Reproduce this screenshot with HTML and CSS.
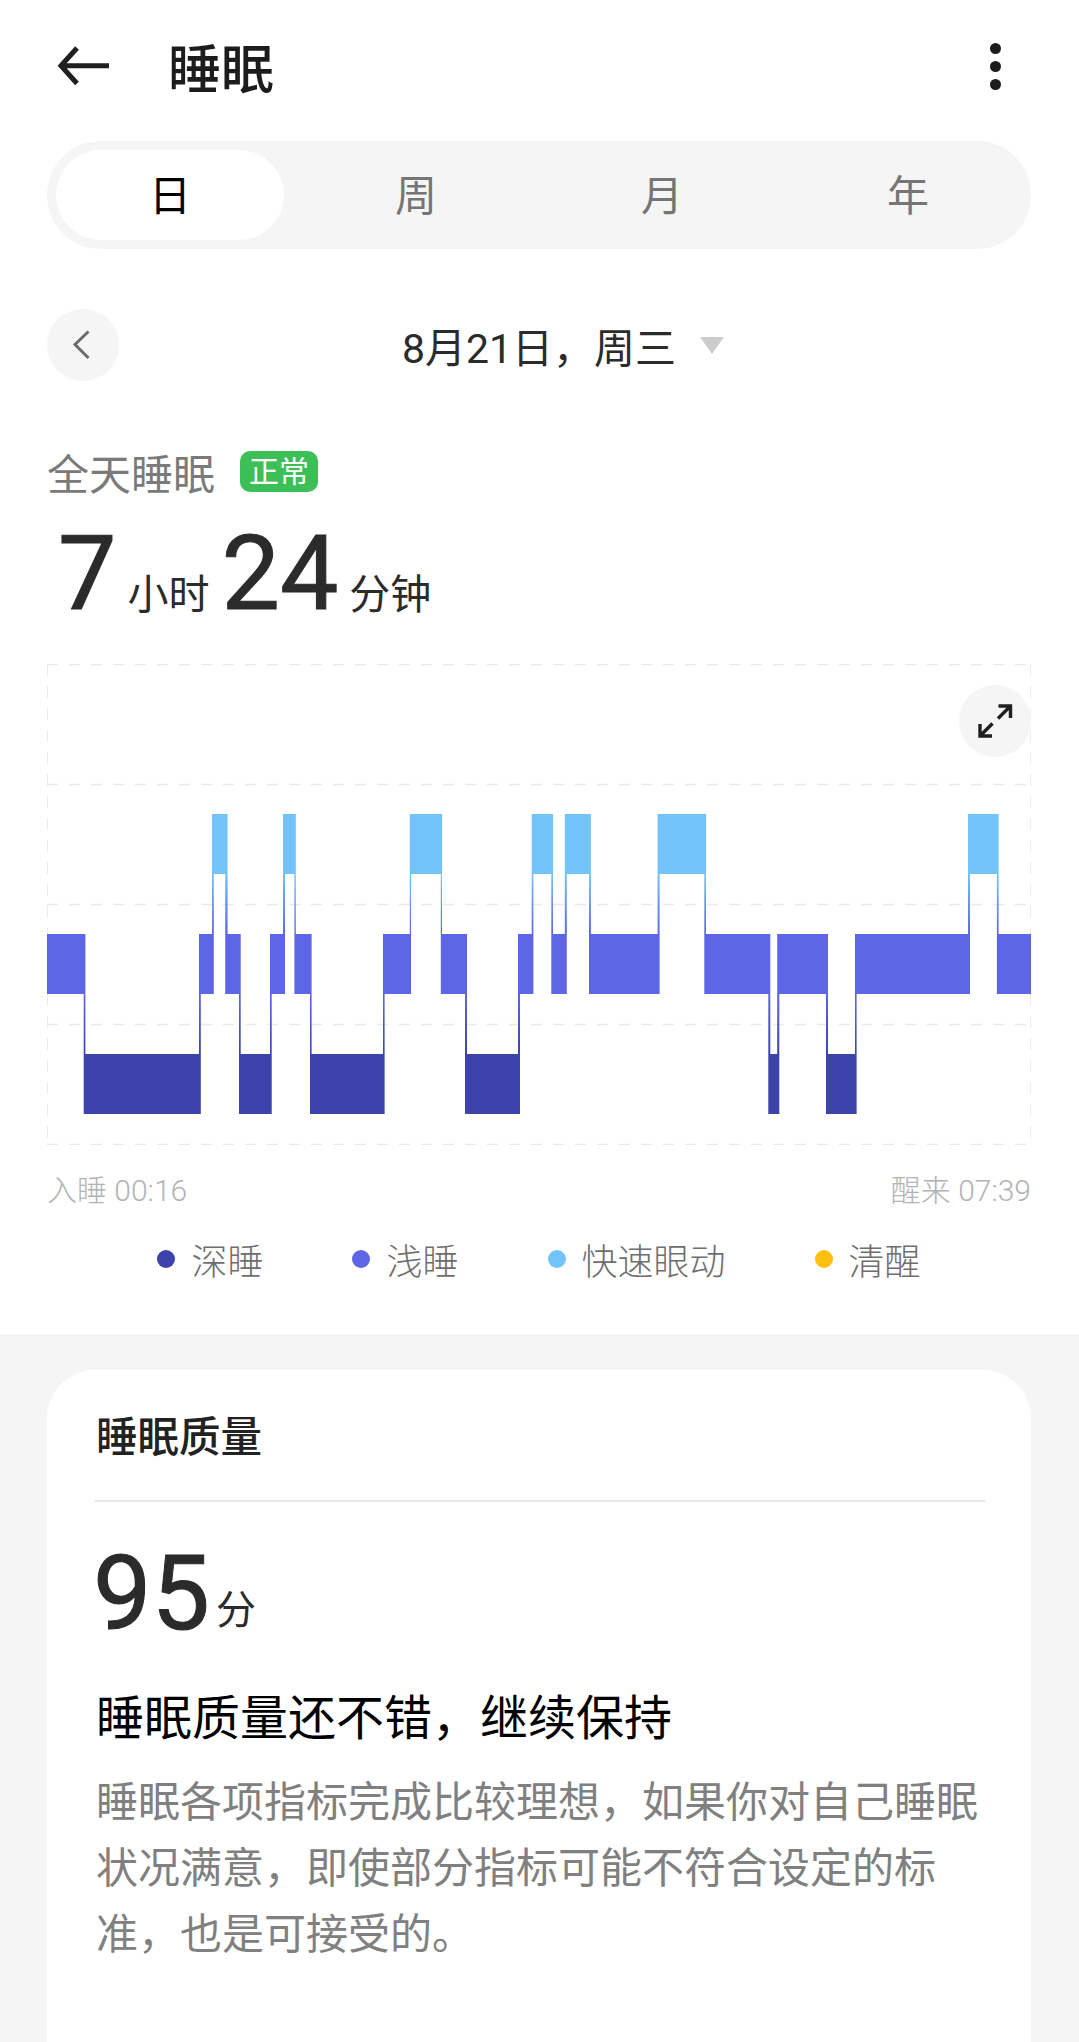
FILE: index.html
```html
<!DOCTYPE html>
<html lang="zh-CN">
<head>
    <meta charset="UTF-8">
    <meta name="viewport" content="width=device-width, initial-scale=1.0">
    <title>睡眠</title>
    <link rel="stylesheet" href="styles.css">
</head>
<body>

    <div class="page">
        <!-- 顶部栏 -->
        <header class="topbar">
            <svg class="back-icon" width="56" height="42" viewBox="0 0 56 42">
                <path d="M22 3 L6 20.7 L22 38.5 M6 20.7 H54" fill="none" stroke="#1f1f1f" stroke-width="5"/>
            </svg>
            <h1 class="title">睡眠</h1>
            <div class="more">
                <span class="more-dot"></span>
                <span class="more-dot"></span>
                <span class="more-dot"></span>
            </div>
        </header>

        <section class="overview">
            <!-- 日周月年 -->
            <div class="tabs">
                <div class="tab active">日</div>
                <div class="tab">周</div>
                <div class="tab">月</div>
                <div class="tab">年</div>
            </div>

            <!-- 日期 -->
            <div class="date-row">
                <div class="round-btn">
                    <svg width="72" height="72" viewBox="0 0 72 72">
                        <path d="M41.5 22.5 L28 35.5 L41.5 49" fill="none" stroke="#6b6b6b" stroke-width="3"/>
                    </svg>
                </div>
                <div class="date-text">8月21日，周三</div>
                <div class="date-caret"></div>
            </div>

            <!-- 全天睡眠 -->
            <div class="label-row">
                <span class="label">全天睡眠</span>
                <span class="badge">正常</span>
            </div>
            <div class="total">
                <span class="big-num">7</span>
                <span class="unit">小时</span>
                <span class="big-num">24</span>
                <span class="unit">分钟</span>
            </div>

            <!-- 睡眠图表 -->
            <div class="chart">
                <svg id="sleepChart" class="chart-svg" width="984" height="481" viewBox="0 0 984 481"></svg>
                <div class="round-btn expand-btn">
                    <svg width="72" height="72" viewBox="0 0 72 72">
                        <path d="M39.5 21 H51.5 V33 M51.5 21 L39 33.5" fill="none" stroke="#1f1f1f" stroke-width="3.4"/>
                        <path d="M21 39 V51 H33 M21 51 L33.5 38.5" fill="none" stroke="#1f1f1f" stroke-width="3.4"/>
                    </svg>
                </div>
            </div>
            <div class="chart-times">
                <span>入睡 00:16</span>
                <span>醒来 07:39</span>
            </div>

            <ul class="legend">
                <li class="legend-item"><i class="dot dot-deep"></i>深睡</li>
                <li class="legend-item"><i class="dot dot-light"></i>浅睡</li>
                <li class="legend-item"><i class="dot dot-rem"></i>快速眼动</li>
                <li class="legend-item"><i class="dot dot-awake"></i>清醒</li>
            </ul>
        </section>

        <!-- 睡眠质量 -->
        <section class="card-area">
            <div class="card">
                <h2 class="card-title">睡眠质量</h2>
                <div class="score">
                    <span class="big-num">95</span><span class="score-unit">分</span>
                </div>
                <h3 class="advice-title">睡眠质量还不错，继续保持</h3>
                <p class="advice-text">睡眠各项指标完成比较理想，如果你对自己睡眠状况满意，即使部分指标可能不符合设定的标准，也是可接受的。</p>
            </div>
        </section>
    </div>

    <script src="chart.js"></script>
</body>
</html>
```
FILE: styles.css
```css
* {
    box-sizing: border-box;
}

html, body {
    margin: 0;
    height: 100%;
}

body {
    font-family: Roboto, "Noto Sans CJK SC", sans-serif;
    background-color: #fff;
    overflow: hidden;
}

.page {
    display: flex;
    flex-direction: column;
    height: 100vh;
}

/* 顶部栏 */
.topbar {
    display: flex;
    align-items: center;
    height: 132px;
    padding: 0 78px 0 55px;
}

.title {
    margin: 0 0 0 57px;
    font-size: 53px;
    font-weight: 500;
    color: #1c1c1c;
}

.more {
    margin-left: auto;
    display: flex;
    flex-direction: column;
    gap: 7px;
}

.more-dot {
    width: 11px;
    height: 11px;
    border-radius: 50%;
    background-color: #1c1c1c;
}

.overview {
    padding: 9px 48px 0 47px;
    height: 1202px;
}

/* 日周月年 */
.tabs {
    display: grid;
    grid-template-columns: repeat(4, 228px);
    gap: 18px;
    align-items: center;
    height: 108px;
    padding: 0 9px;
    border-radius: 54px;
    background-color: #f5f5f5;
}

.tab {
    height: 90px;
    line-height: 94px;
    border-radius: 45px;
    text-align: center;
    font-size: 42px;
    color: #757575;
}

.tab.active {
    background-color: #fff;
    color: #000;
}

/* 日期 */
.date-row {
    display: grid;
    grid-template-columns: 1fr auto 1fr;
    align-items: center;
    margin-top: 60px;
}

.round-btn {
    width: 72px;
    height: 72px;
    border-radius: 50%;
    background-color: #f5f5f5;
}

.round-btn svg {
    display: block;
}

.date-text {
    font-size: 41px;
    color: #2b2b2b;
}

.date-caret {
    width: 0;
    height: 0;
    margin-left: 24px;
    border-left: 12.5px solid transparent;
    border-right: 12.5px solid transparent;
    border-top: 17px solid #cccccc;
}

/* 全天睡眠 */
.label-row {
    display: flex;
    align-items: center;
    gap: 25px;
    margin-top: 70px;
    height: 41px;
}

.label {
    font-size: 42px;
    color: #7a7a7a;
}

.badge {
    width: 78px;
    height: 41px;
    line-height: 42px;
    border-radius: 10px;
    background-color: #3dbf58;
    text-align: center;
    font-size: 30px;
    color: #fff;
}

.total {
    display: flex;
    align-items: baseline;
    margin-top: 21px;
    padding-left: 11px;
    color: #2b2b2b;
    height: 122px;
}

.big-num {
    font-size: 104px;
    line-height: 122px;
    -webkit-text-stroke: 1px #2b2b2b;
}

.unit {
    font-size: 41px;
    margin: 0 12px 0 11px;
}

/* 睡眠图表 */
.chart {
    position: relative;
    margin-top: 29px;
    height: 481px;
}

.chart-svg {
    display: block;
}

.expand-btn {
    position: absolute;
    top: 21px;
    right: 0;
}

.chart-times {
    display: flex;
    justify-content: space-between;
    margin-top: 21px;
    font-size: 30px;
    font-weight: 300;
    color: #b3b3b3;
}

.legend {
    display: flex;
    justify-content: center;
    gap: 89px;
    list-style: none;
    margin: 23px 0 0;
    padding: 0;
}

.legend-item {
    display: flex;
    align-items: center;
    gap: 16px;
    font-size: 36px;
    font-weight: 300;
    color: #6e6e6e;
}

.dot {
    width: 18px;
    height: 18px;
    border-radius: 50%;
}

.dot-deep { background-color: #3c43ab; }
.dot-light { background-color: #5f66e6; }
.dot-rem { background-color: #72c3fa; }
.dot-awake { background-color: #fdc010; }

/* 睡眠质量 */
.card-area {
    flex: 1;
    padding: 36px 48px 0 47px;
    background-color: #f5f5f5;
}

.card {
    height: 100%;
    padding: 0 48px 0 49px;
    border-radius: 48px 48px 0 0;
    background-color: #fff;
}

.card-title {
    margin: 0 -2px 0 -1px;
    height: 132px;
    line-height: 136px;
    padding-left: 1px;
    border-bottom: 2px solid #e8e8e8;
    font-size: 41.5px;
    font-weight: 500;
    color: #222;
}

.score {
    margin-top: 31px;
    margin-left: -3px;
    color: #2b2b2b;
    height: 122px;
}

.score-unit {
    position: relative;
    top: -5px;
    font-size: 40px;
    margin-left: 6px;
}

.advice-title {
    margin: 29px 0 0;
    font-size: 48px;
    font-weight: 400;
    line-height: 70px;
    color: #000;
}

.advice-text {
    margin: 16px 0 0;
    font-size: 42px;
    line-height: 66px;
    color: #808080;
}
```
FILE: chart.js
```js
const NS = "http://www.w3.org/2000/svg";
const STAGES = {
    rem: { top: 150, color: "#72c3fa" },
    light: { top: 270, color: "#5f66e6" },
    deep: { top: 390, color: "#3c43ab" }
};
const BAR_HEIGHT = 60;

// 每段：阶段、起点、终点
const segments = [
    ["light", 0, 38.4], ["deep", 36.7, 153.8], ["light", 152, 166.8],
    ["rem", 165, 180.6], ["light", 178.2, 193.7], ["deep", 192, 224.7],
    ["light", 223, 238], ["rem", 236, 248.8], ["light", 247.4, 264.6],
    ["deep", 263, 337.6], ["light", 336, 364], ["rem", 362.8, 395],
    ["light", 393.8, 420], ["deep", 418, 473], ["light", 471, 486.4],
    ["rem", 484.7, 506], ["light", 504.3, 519.8], ["rem", 517.8, 543.9],
    ["light", 542, 612.6], ["rem", 610.6, 659], ["light", 657.3, 723.3],
    ["deep", 721.3, 732.3], ["light", 730.2, 781], ["deep", 779, 809.6],
    ["light", 808, 923], ["rem", 921, 951.6], ["light", 949.9, 984]
];

const svg = document.getElementById("sleepChart");

function add(parent, tag, attrs) {
    const el = document.createElementNS(NS, tag);
    Object.keys(attrs).forEach(key => el.setAttribute(key, attrs[key]));
    parent.appendChild(el);
    return el;
}

function addGradient(defs, id, from, to) {
    const gradient = add(defs, "linearGradient", { id: id, x1: 0, y1: 0, x2: 0, y2: 1 });
    add(gradient, "stop", { offset: "0", "stop-color": from });
    add(gradient, "stop", { offset: "1", "stop-color": to });
}

const defs = add(svg, "defs", {});
addGradient(defs, "remLight", STAGES.rem.color, STAGES.light.color);
addGradient(defs, "lightDeep", STAGES.light.color, STAGES.deep.color);

// 虚线网格
[0.5, 120.5, 240.5, 360.5, 480.5].forEach(y => {
    add(svg, "line", { x1: 0, y1: y, x2: 984, y2: y, stroke: "#e9e9e9", "stroke-width": 1.6, "stroke-dasharray": "11 11" });
});
[0.5, 983.5].forEach(x => {
    add(svg, "line", { x1: x, y1: 0, x2: x, y2: 481, stroke: "#ececec", "stroke-width": 1, "stroke-dasharray": "12 10" });
});

// 色块和连接线
segments.forEach((seg, i) => {
    const stage = STAGES[seg[0]];
    add(svg, "rect", { x: seg[1], y: stage.top, width: seg[2] - seg[1], height: BAR_HEIGHT, fill: stage.color });

    const next = segments[i + 1];
    if (!next) return;
    const nextStage = STAGES[next[0]];
    const upper = stage.top < nextStage.top ? stage : nextStage;
    add(svg, "rect", {
        x: next[1],
        y: upper.top + BAR_HEIGHT,
        width: seg[2] - next[1],
        height: BAR_HEIGHT,
        fill: upper === STAGES.rem ? "url(#remLight)" : "url(#lightDeep)"
    });
});
```
